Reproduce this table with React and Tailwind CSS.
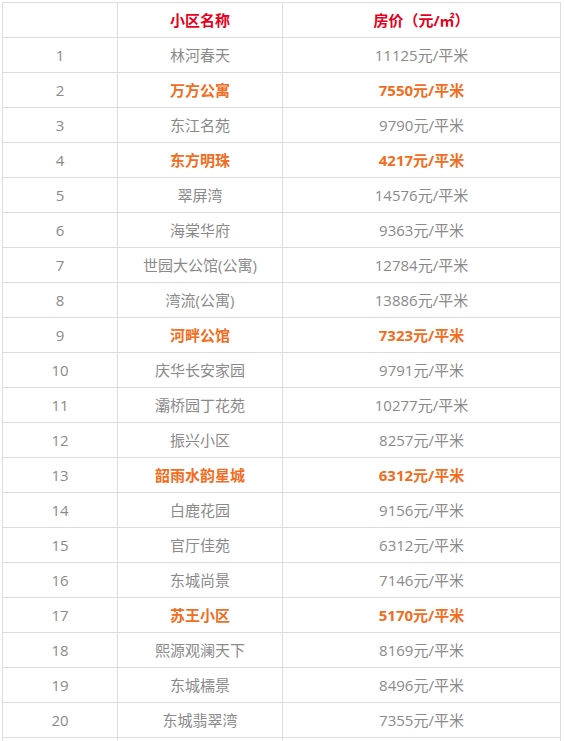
const rows = [
  [1, "林河春天", "11125元/平米", false],
  [2, "万方公寓", "7550元/平米", true],
  [3, "东江名苑", "9790元/平米", false],
  [4, "东方明珠", "4217元/平米", true],
  [5, "翠屏湾", "14576元/平米", false],
  [6, "海棠华府", "9363元/平米", false],
  [7, "世园大公馆(公寓)", "12784元/平米", false],
  [8, "湾流(公寓)", "13886元/平米", false],
  [9, "河畔公馆", "7323元/平米", true],
  [10, "庆华长安家园", "9791元/平米", false],
  [11, "灞桥园丁花苑", "10277元/平米", false],
  [12, "振兴小区", "8257元/平米", false],
  [13, "韶雨水韵星城", "6312元/平米", true],
  [14, "白鹿花园", "9156元/平米", false],
  [15, "官厅佳苑", "6312元/平米", false],
  [16, "东城尚景", "7146元/平米", false],
  [17, "苏王小区", "5170元/平米", true],
  [18, "熙源观澜天下", "8169元/平米", false],
  [19, "东城檽景", "8496元/平米", false],
  [20, "东城翡翠湾", "7355元/平米", false],
  [21, "", "", false],
];

export default function App() {
  return (
    <div
      className="bg-white w-[564px] h-[741px] overflow-hidden pt-[2px] pl-[2px]"
      style={{ fontFamily: '"Open Sans", "Noto Sans CJK SC", sans-serif' }}
    >
      <div className="w-[559px] border-l border-t border-[#dcdcdc]">
        <div className="grid grid-cols-[115px_165px_278px] h-[35px] text-[15px] font-bold text-[#e5001c]">
          <div className="border-r border-b border-[#dcdcdc]"></div>
          <div className="border-r border-b border-[#dcdcdc] flex items-center justify-center">小区名称</div>
          <div className="border-r border-b border-[#dcdcdc] flex items-center justify-center">房价（元/㎡）</div>
        </div>
        {rows.map(([n, name, price, hl]) => (
          <div
            key={n}
            className={`grid grid-cols-[115px_165px_278px] h-[35px] text-[15px] ${
              hl ? "font-bold text-[#f26d21]" : "text-[#8a8a8a]"
            }`}
          >
            <div className="border-r border-b border-[#dcdcdc] flex items-center justify-center font-normal text-[#8a8a8a]">
              {n <= 20 ? n : ""}
            </div>
            <div className="border-r border-b border-[#dcdcdc] flex items-center justify-center">{name}</div>
            <div className="border-r border-b border-[#dcdcdc] flex items-center justify-center">{price}</div>
          </div>
        ))}
      </div>
    </div>
  );
}
